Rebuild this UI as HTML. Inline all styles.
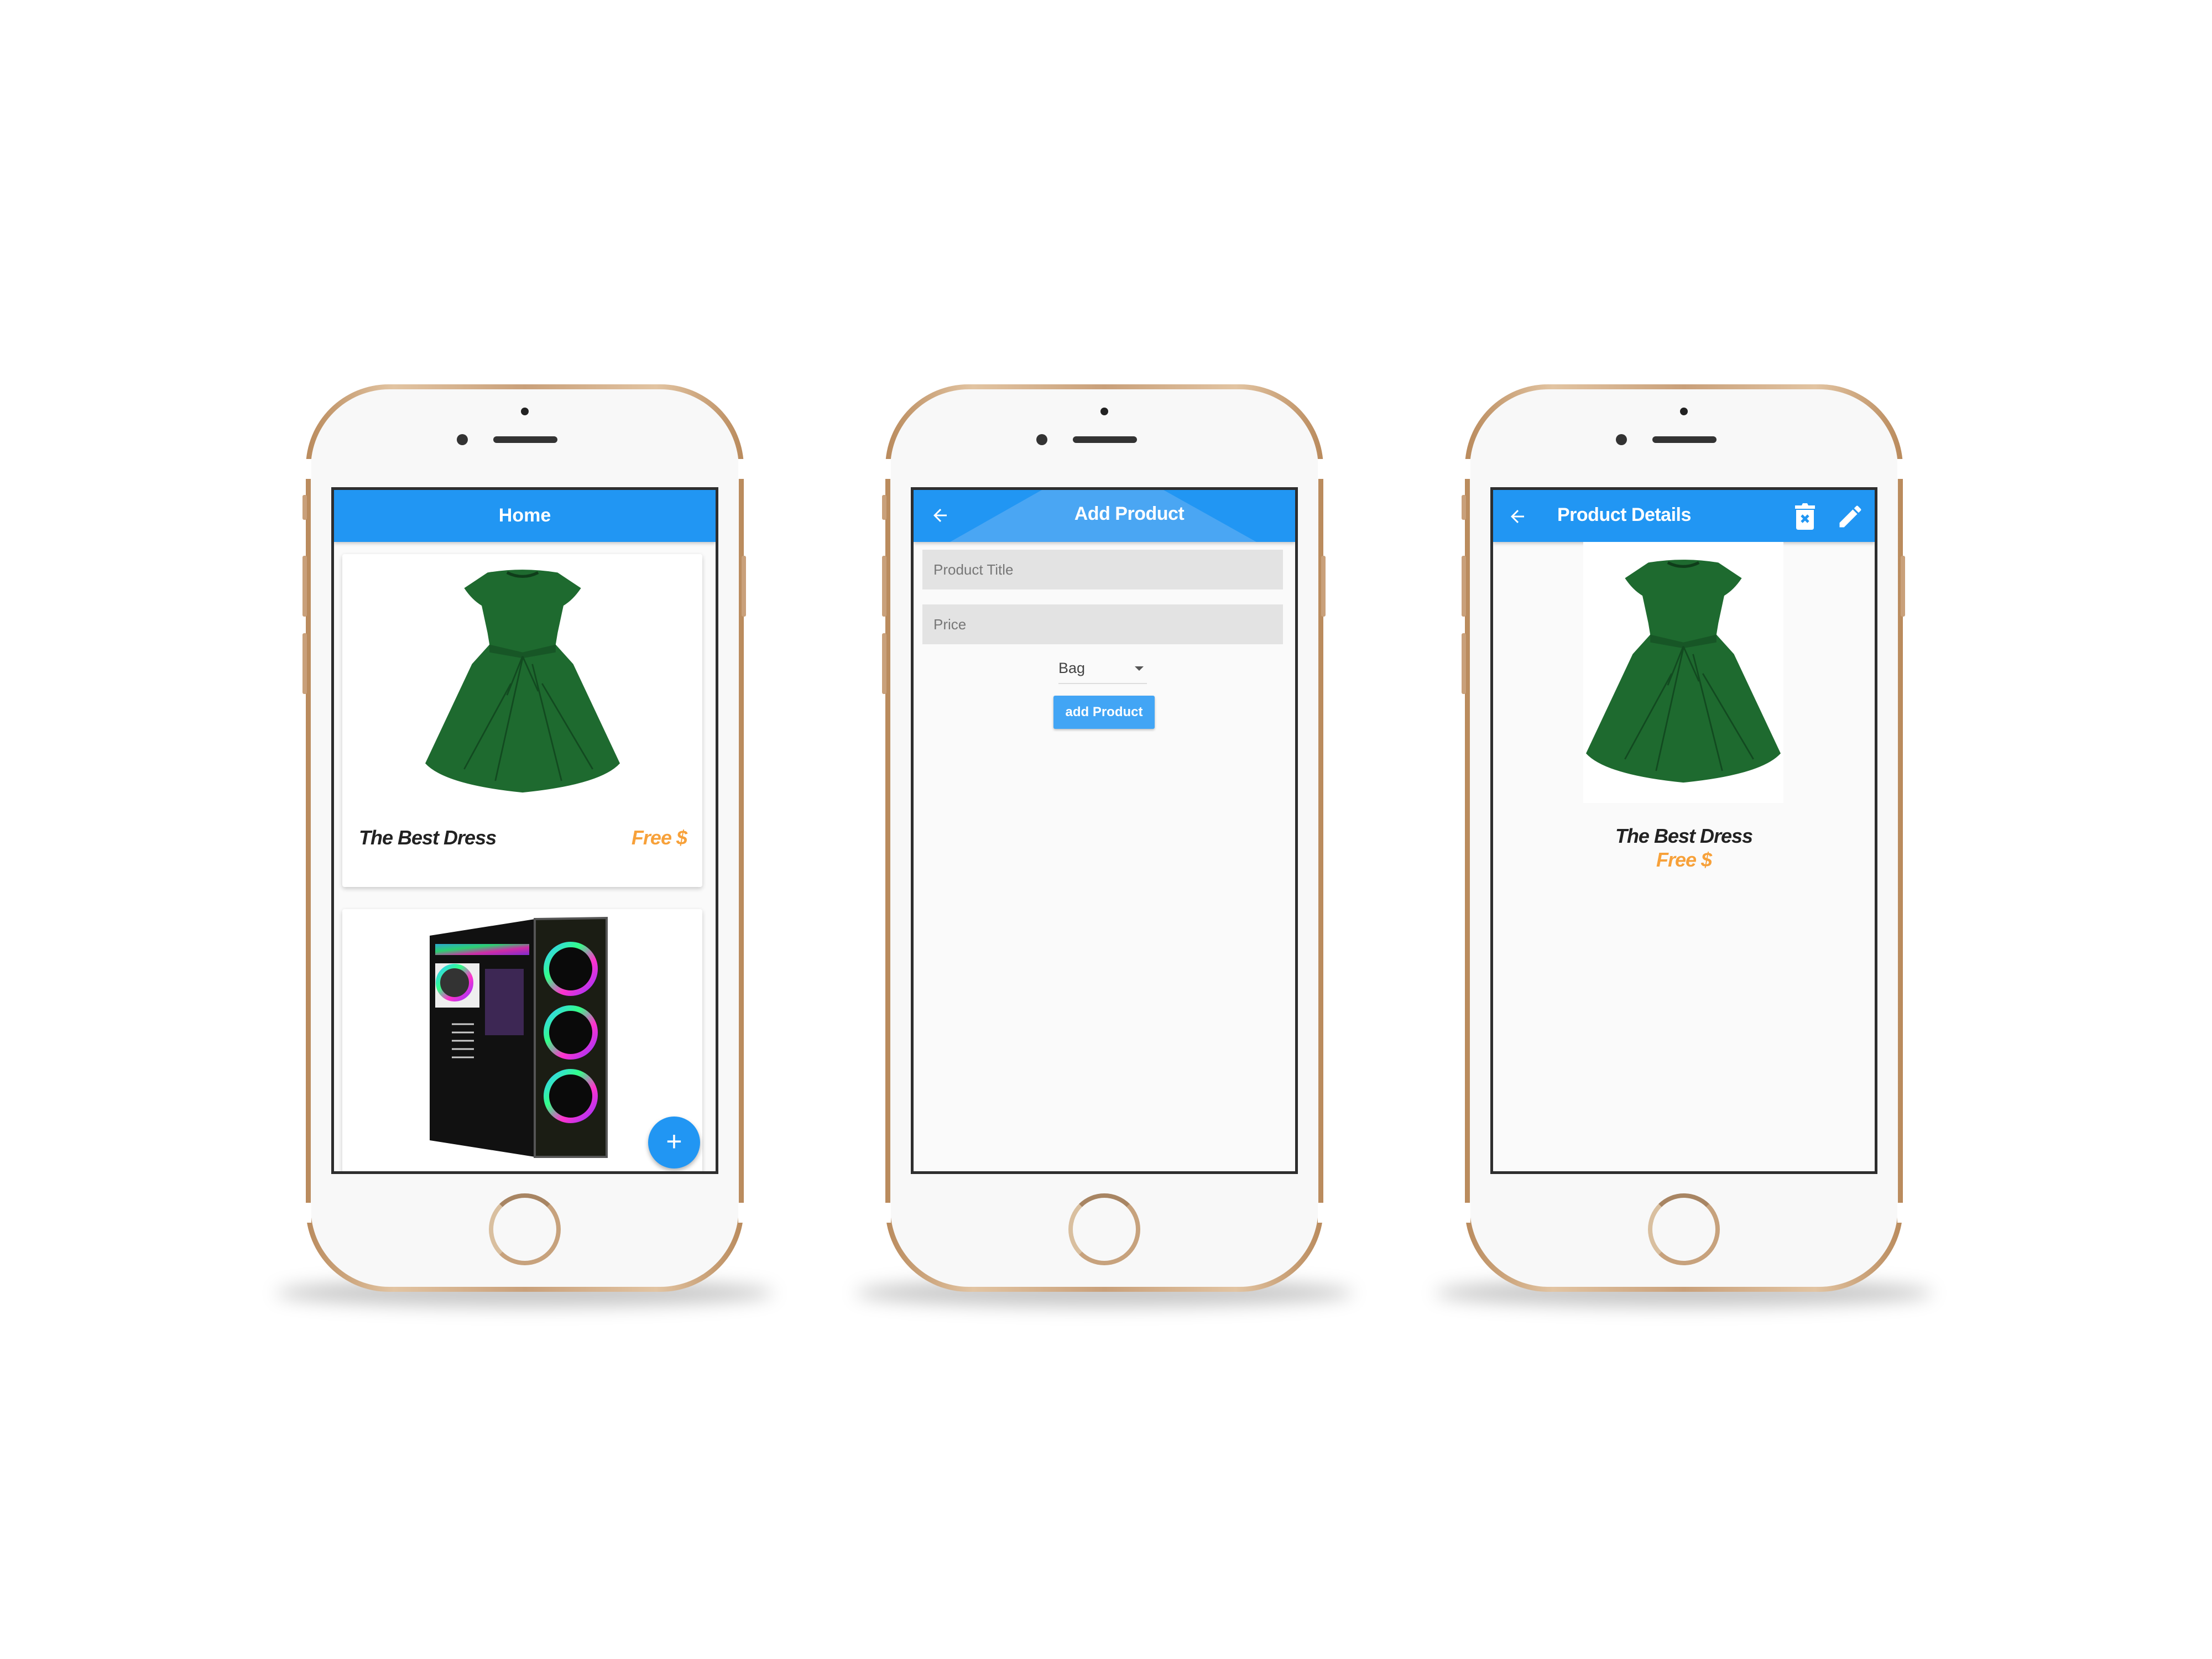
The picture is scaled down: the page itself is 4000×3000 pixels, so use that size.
<!DOCTYPE html>
<html><head><meta charset="utf-8"><style>
*{margin:0;padding:0;box-sizing:border-box}
body{width:4000px;height:3000px;background:#fff;position:relative;overflow:hidden;font-family:"Liberation Sans",sans-serif}
#w{position:absolute;left:-5px;top:-5px;width:4000px;height:3000px}
.a{position:absolute}
.phone{position:absolute;top:700px;width:792px;height:1641px;border-radius:150px;background:linear-gradient(90deg,#b98a5c,#e2c4a2 20%,#c9a07a 50%,#e2c4a2 80%,#b98a5c)}
.phone .in{position:absolute;left:9px;top:9px;right:9px;bottom:9px;border-radius:142px;background:#f8f8f8}
.band{position:absolute;width:12px;height:36px;background:#fff}
.shadow{position:absolute;top:2318px;width:900px;height:50px;border-radius:50%;background:rgba(0,0,0,.22);filter:blur(16px)}
.cam{position:absolute;width:20px;height:20px;border-radius:50%;background:#333}
.spk{position:absolute;width:116px;height:12px;border-radius:6px;background:#333}
.dot{position:absolute;width:14px;height:14px;border-radius:50%;background:#222}
.home{position:absolute;width:130px;height:130px;border-radius:50%;border:8px solid #c7a27d;border-top-color:#a88563;border-left-color:#d9bf9f}
.screen{position:absolute;top:886px;width:700px;height:1242px;border:5px solid #2e2e2e;background:#fafafa;overflow:hidden}
.bar{position:absolute;left:0;top:0;right:0;height:94px;background:#2196f3;box-shadow:0 3px 6px rgba(0,0,0,.2);color:#fff;font-weight:bold}
.side{position:absolute;width:8px;background:#c9a07a;border-radius:3px}
.tt{font-weight:bold;font-style:italic;letter-spacing:-1px}
</style></head><body><div id="w">

<div class="shadow" style="left:504px"></div>
<div class="shadow" style="left:1552px"></div>
<div class="shadow" style="left:2600px"></div>

<div class="phone" style="left:558px"><div class="in"></div></div>
<div class="phone" style="left:1606px"><div class="in"></div></div>
<div class="phone" style="left:2654px"><div class="in"></div></div>

<div class="side" style="left:552px;top:900px;height:45px"></div>
<div class="side" style="left:552px;top:1010px;height:110px"></div>
<div class="side" style="left:552px;top:1150px;height:110px"></div>
<div class="side" style="left:1346px;top:1010px;height:110px"></div>
<div class="side" style="left:1600px;top:900px;height:45px"></div>
<div class="side" style="left:1600px;top:1010px;height:110px"></div>
<div class="side" style="left:1600px;top:1150px;height:110px"></div>
<div class="side" style="left:2394px;top:1010px;height:110px"></div>
<div class="side" style="left:2648px;top:900px;height:45px"></div>
<div class="side" style="left:2648px;top:1010px;height:110px"></div>
<div class="side" style="left:2648px;top:1150px;height:110px"></div>
<div class="side" style="left:3442px;top:1010px;height:110px"></div>

<div class="band" style="left:556px;top:835px"></div><div class="band" style="left:1340px;top:835px"></div>
<div class="band" style="left:556px;top:2180px"></div><div class="band" style="left:1340px;top:2180px"></div>
<div class="band" style="left:1604px;top:835px"></div><div class="band" style="left:2388px;top:835px"></div>
<div class="band" style="left:1604px;top:2180px"></div><div class="band" style="left:2388px;top:2180px"></div>
<div class="band" style="left:2652px;top:835px"></div><div class="band" style="left:3436px;top:835px"></div>
<div class="band" style="left:2652px;top:2180px"></div><div class="band" style="left:3436px;top:2180px"></div>

<div class="dot" style="left:947px;top:742px"></div><div class="cam" style="left:831px;top:790px"></div><div class="spk" style="left:897px;top:794px"></div><div class="home" style="left:889px;top:2163px"></div>
<div class="dot" style="left:1995px;top:742px"></div><div class="cam" style="left:1879px;top:790px"></div><div class="spk" style="left:1945px;top:794px"></div><div class="home" style="left:1937px;top:2163px"></div>
<div class="dot" style="left:3043px;top:742px"></div><div class="cam" style="left:2927px;top:790px"></div><div class="spk" style="left:2993px;top:794px"></div><div class="home" style="left:2985px;top:2163px"></div>

<!-- SCREEN 1 -->
<div class="screen" style="left:604px">
  <div class="bar" style="font-size:34px;text-align:center;line-height:92px">Home</div>
  <div class="a" style="left:15px;top:116px;width:651px;height:602px;background:#fff;border-radius:4px;box-shadow:0 3px 8px rgba(0,0,0,.2)">
    <svg class="a" style="left:150px;top:22px" width="352" height="424" viewBox="0 0 100 120">
      <path d="M32 3 Q50 0 68 3 L80 11 Q76 17 71 20 L68 34 L67 40 L76 50 L100 101 Q90 112 50 116 Q10 112 0 101 L24 50 L33 40 L32 34 L29 20 Q24 17 20 11 Z" fill="#1e6a2f"/>
      <path d="M42 3 Q50 7 58 3" stroke="#0f3d1a" stroke-width="1.5" fill="none"/>
      <path d="M33 40 L50 44 L67 40 L67 44 L50 47 L33 44 Z" fill="#175626"/>
      <path d="M50 46 L42 66 M50 46 L58 64 M50 47 L36 110 M55 50 L70 110 M44 60 L20 104 M60 60 L86 104" stroke="#124a20" stroke-width="0.8" fill="none"/>
    </svg>
    <div class="a tt" style="left:30px;top:492px;font-size:36px;color:#222">The Best Dress</div>
    <div class="a tt" style="right:28px;top:492px;font-size:36px;color:#f7a13a">Free $</div>
  </div>
  <div class="a" style="left:15px;top:758px;width:651px;height:600px;background:#fff;border-radius:4px;box-shadow:0 3px 8px rgba(0,0,0,.2)">
    <svg class="a" style="left:158px;top:8px" width="330" height="460" viewBox="0 0 330 460">
      <defs><linearGradient id="rg" x1="0" y1="0" x2="1" y2="1"><stop offset="0" stop-color="#3cf"/><stop offset=".35" stop-color="#3f8"/><stop offset=".65" stop-color="#f3c"/><stop offset="1" stop-color="#93f"/></linearGradient></defs>
      <polygon points="0,40 190,10 190,440 0,410" fill="#111"/>
      <polygon points="190,10 320,8 320,440 190,440" fill="#1b1d14" stroke="#555" stroke-width="4"/>
      <rect x="10" y="55" width="170" height="20" fill="url(#rg)" opacity=".8"/>
      <rect x="10" y="90" width="80" height="80" fill="#eee"/>
      <circle cx="45" cy="125" r="30" fill="#333" stroke="url(#rg)" stroke-width="8"/>
      <rect x="100" y="100" width="70" height="120" fill="#503070" opacity=".7"/>
      <g stroke="#ccc" stroke-width="3"><line x1="40" y1="200" x2="80" y2="200"/><line x1="40" y1="215" x2="80" y2="215"/><line x1="40" y1="230" x2="80" y2="230"/><line x1="40" y1="245" x2="80" y2="245"/><line x1="40" y1="260" x2="80" y2="260"/></g>
      <circle cx="255" cy="100" r="44" fill="#0a0a0a" stroke="url(#rg)" stroke-width="10"/>
      <circle cx="255" cy="215" r="44" fill="#0a0a0a" stroke="url(#rg)" stroke-width="10"/>
      <circle cx="255" cy="330" r="44" fill="#0a0a0a" stroke="url(#rg)" stroke-width="10"/>
    </svg>
  </div>
  <div class="a" style="left:568px;top:1133px;width:94px;height:94px;border-radius:50%;background:#2196f3;box-shadow:0 4px 8px rgba(0,0,0,.3);color:#fff;font-size:50px;text-align:center;line-height:90px">+</div>
</div>

<!-- SCREEN 2 -->
<div class="screen" style="left:1652px">
  <div class="bar">
    <div class="a" style="left:0;top:0;width:690px;height:94px;background:#4aa6f3;clip-path:polygon(232px 0,452px 0,620px 94px,66px 94px)"></div>
    <svg class="a" style="left:30px;top:28px" width="36" height="36" viewBox="0 0 24 24"><path d="M20 11H7.8l5.6-5.6L12 4l-8 8 8 8 1.4-1.4L7.8 13H20z" fill="#fff"/></svg>
    <div class="a" style="left:0;width:690px;top:24px;text-align:center;font-size:34px;padding-left:90px;letter-spacing:-0.5px">Add Product</div>
  </div>
  <div class="a" style="left:16px;top:108px;width:652px;height:72px;background:#e3e3e3;color:#777;font-size:26px;line-height:72px;padding-left:20px">Product Title</div>
  <div class="a" style="left:16px;top:207px;width:652px;height:72px;background:#e3e3e3;color:#777;font-size:26px;line-height:72px;padding-left:20px">Price</div>
  <div class="a" style="left:262px;top:307px;font-size:27px;color:#444">Bag</div>
  <div class="a" style="left:400px;top:319px;width:0;height:0;border-left:8px solid transparent;border-right:8px solid transparent;border-top:8px solid #555"></div>
  <div class="a" style="left:262px;top:349px;width:160px;height:2px;background:#ddd"></div>
  <div class="a" style="left:253px;top:372px;width:183px;height:60px;background:#42a5f5;border-radius:3px;box-shadow:0 2px 4px rgba(0,0,0,.25);color:#fff;font-weight:bold;font-size:24px;text-align:center;line-height:60px">add Product</div>
</div>

<!-- SCREEN 3 -->
<div class="screen" style="left:2700px">
  <div class="bar">
    <svg class="a" style="left:26px;top:30px" width="36" height="36" viewBox="0 0 24 24"><path d="M20 11H7.8l5.6-5.6L12 4l-8 8 8 8 1.4-1.4L7.8 13H20z" fill="#fff"/></svg>
    <div class="a" style="left:116px;top:26px;font-size:34px;letter-spacing:-0.5px">Product Details</div>
    <svg class="a" style="left:542px;top:24px" width="44" height="48" viewBox="0 0 22 24"><path d="M2 2H8L9 0H13L14 2H20V5H2Z M3 6H19V22Q19 24 17 24H5Q3 24 3 22Z" fill="#fff"/><path d="M8 11L14 17M14 11L8 17" stroke="#2196f3" stroke-width="2.4"/></svg>
    <svg class="a" style="left:620px;top:22px" width="52" height="52" viewBox="0 0 24 24"><path d="M3 17.25V21h3.75L17.81 9.94l-3.75-3.75L3 17.25zM20.71 7.04a1 1 0 0 0 0-1.41l-2.34-2.34a1 1 0 0 0-1.41 0l-1.83 1.83 3.75 3.75 1.83-1.83z" fill="#fff"/></svg>
  </div>
  <div class="a" style="left:163px;top:94px;width:362px;height:472px;background:#fff"></div>
  <svg class="a" style="left:168px;top:120px" width="352" height="424" viewBox="0 0 100 120">
    <path d="M32 3 Q50 0 68 3 L80 11 Q76 17 71 20 L68 34 L67 40 L76 50 L100 101 Q90 112 50 116 Q10 112 0 101 L24 50 L33 40 L32 34 L29 20 Q24 17 20 11 Z" fill="#1e6a2f"/>
    <path d="M42 3 Q50 7 58 3" stroke="#0f3d1a" stroke-width="1.5" fill="none"/>
    <path d="M33 40 L50 44 L67 40 L67 44 L50 47 L33 44 Z" fill="#175626"/>
    <path d="M50 46 L42 66 M50 46 L58 64 M50 47 L36 110 M55 50 L70 110 M44 60 L20 104 M60 60 L86 104" stroke="#124a20" stroke-width="0.8" fill="none"/>
  </svg>
  <div class="a tt" style="left:0;width:690px;top:605px;text-align:center;font-size:36px;color:#222">The Best Dress</div>
  <div class="a tt" style="left:0;width:690px;top:648px;text-align:center;font-size:36px;color:#f7a13a">Free $</div>
</div>

</div></body></html>
